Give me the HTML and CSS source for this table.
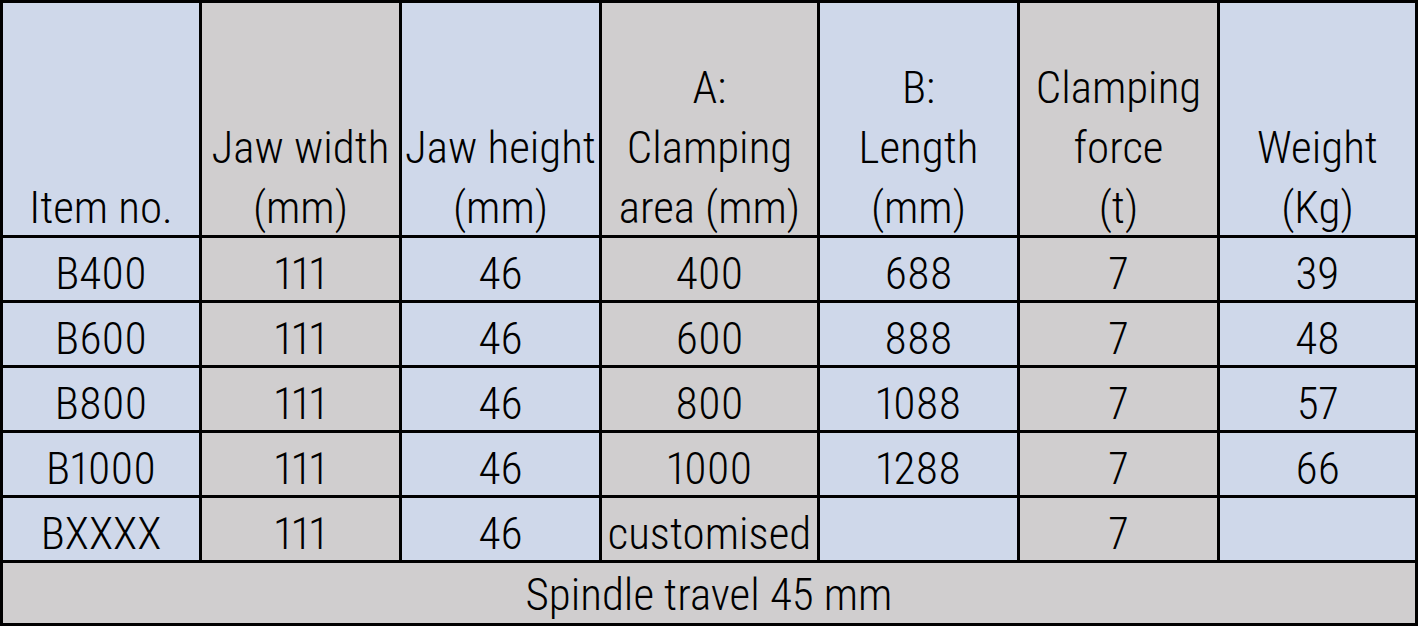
FILE: index.html
```html
<!DOCTYPE html>
<html lang="en">
<head>
<meta charset="utf-8">
<title>Clamping table</title>
<link rel="stylesheet" href="styles.css">
</head>
<body>
<div class="spec-table">
  <div class="cell head blue"><span>Item no.</span></div>
  <div class="cell head gray"><span>Jaw width<br>(mm)</span></div>
  <div class="cell head blue"><span>Jaw height<br>(mm)</span></div>
  <div class="cell head gray"><span>A:<br>Clamping<br>area (mm)</span></div>
  <div class="cell head blue"><span>B:<br>Length<br>(mm)</span></div>
  <div class="cell head gray"><span>Clamping<br>force<br>(t)</span></div>
  <div class="cell head blue"><span>Weight<br>(Kg)</span></div>

  <div class="cell blue">B400</div>
  <div class="cell gray">111</div>
  <div class="cell blue">46</div>
  <div class="cell gray">400</div>
  <div class="cell blue">688</div>
  <div class="cell gray">7</div>
  <div class="cell blue">39</div>

  <div class="cell blue">B600</div>
  <div class="cell gray">111</div>
  <div class="cell blue">46</div>
  <div class="cell gray">600</div>
  <div class="cell blue">888</div>
  <div class="cell gray">7</div>
  <div class="cell blue">48</div>

  <div class="cell blue">B800</div>
  <div class="cell gray">111</div>
  <div class="cell blue">46</div>
  <div class="cell gray">800</div>
  <div class="cell blue">1088</div>
  <div class="cell gray">7</div>
  <div class="cell blue">57</div>

  <div class="cell blue">B1000</div>
  <div class="cell gray">111</div>
  <div class="cell blue">46</div>
  <div class="cell gray">1000</div>
  <div class="cell blue">1288</div>
  <div class="cell gray">7</div>
  <div class="cell blue">66</div>

  <div class="cell blue">BXXXX</div>
  <div class="cell gray">111</div>
  <div class="cell blue">46</div>
  <div class="cell gray">customised</div>
  <div class="cell blue"></div>
  <div class="cell gray">7</div>
  <div class="cell blue"></div>

  <div class="cell gray footer">Spindle travel 45 mm</div>
</div>
</body>
</html>
```
FILE: styles.css
```css
html, body {
  margin: 0;
  padding: 0;
  background: #ffffff;
}

.spec-table {
  display: grid;
  width: 1418px;
  height: 626px;
  box-sizing: border-box;
  padding: 3px;
  gap: 3px;
  background: #000000;
  grid-template-columns: 196px 197px 197px 215px 197px 197px 195px;
  grid-template-rows: 232px 62px 62px 62px 62px 62px 60px;
  font-family: "Roboto", "Liberation Sans", sans-serif;
  font-stretch: 75%;
  font-weight: 300;
  font-size: 45px;
  font-variant-numeric: proportional-nums;
  color: #000000;
}

.cell {
  text-align: center;
  white-space: nowrap;
  line-height: 62px;
  padding-top: 5px;
  box-sizing: border-box;
  overflow: visible;
}

.blue { background: #cfd8ea; }
.gray { background: #d0cecf; }

.head {
  display: flex;
  flex-direction: column;
  justify-content: flex-end;
  align-items: center;
  padding-top: 0;
  line-height: 60px;
}

.head span {
  display: block;
  margin-bottom: -3px;
}

.footer {
  grid-column: 1 / -1;
  line-height: 60px;
  padding-top: 2px;
}
```
